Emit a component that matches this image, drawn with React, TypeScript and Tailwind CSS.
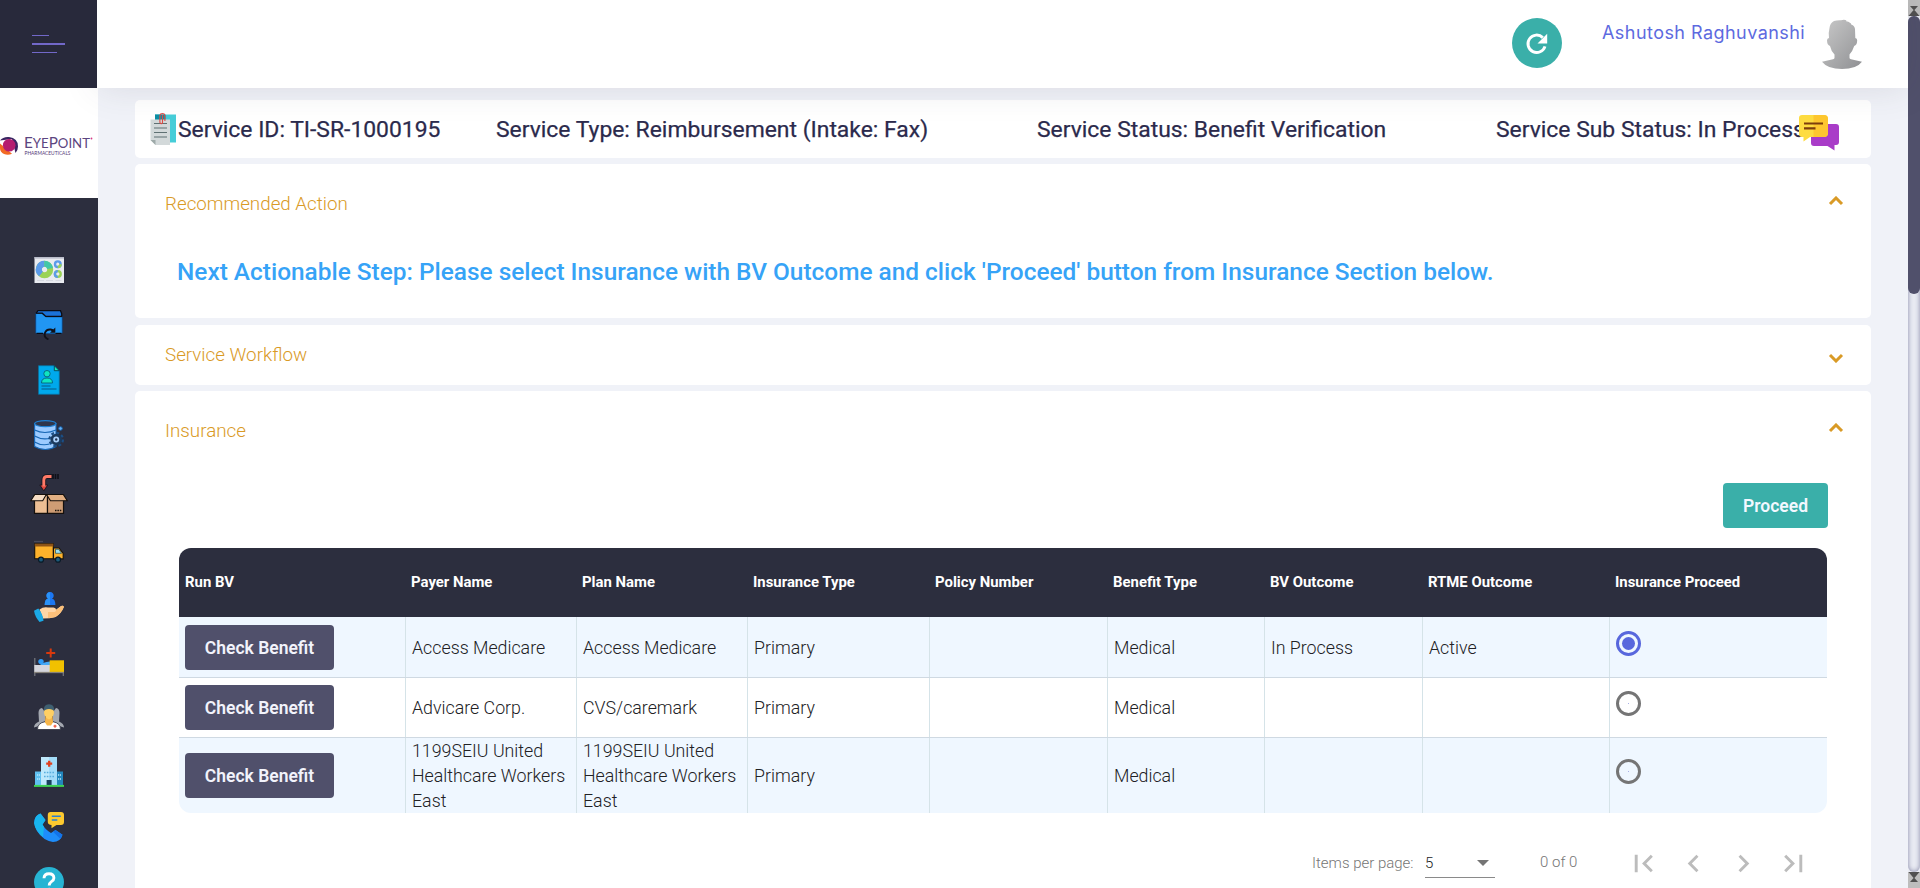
import React from "react";

/* ---------- sidebar icons ---------- */

const Dashboard = () => (
  <svg className="h-[30px] w-[30px] shrink-0" viewBox="0 0 30 30">
    <rect x="0.5" y="2" width="29.5" height="26" fill="#e9ebf0" />
    <rect x="0.5" y="2" width="29.5" height="1.6" fill="#b9bcc9" />
    <circle cx="10.5" cy="14.5" r="5.700" fill="none" stroke="#9ad356" strokeWidth="6" />
    <path d="M7 19a5.700 5.700 0 0 1 3.500-10.200" fill="none" stroke="#5b9bea" strokeWidth="6" />
    <path d="M10.500 8.800a5.700 5.700 0 0 1 5.600 4.700" fill="none" stroke="#42c7a8" strokeWidth="6" />
    <circle cx="23.8" cy="9.200" r="2.800" fill="none" stroke="#5b9bea" strokeWidth="2.400" />
    <path d="M26.600 9.200a2.800 2.800 0 0 1-2.800 2.800" fill="none" stroke="#9ad356" strokeWidth="2.400" />
    <circle cx="23.8" cy="19" r="2.900" fill="none" stroke="#9ad356" strokeWidth="2.400" />
    <path d="M23.800 21.900a2.900 2.900 0 0 1 0-5.800" fill="none" stroke="#5b9bea" strokeWidth="2.400" />
    <path d="M3 25.500h7M12 25.500h7M21.500 25.500h6" stroke="#d4d7de" strokeWidth="0.9" />
  </svg>
);

const FolderSync = () => (
  <svg className="h-[30px] w-[30px] shrink-0" viewBox="0 0 30 30">
    <path d="M4 0.700h22.500l1.200 3V9H2V3.500z" fill="#1b72d8" stroke="#0b0c14" strokeWidth="1.200" />
    <path d="M1.700 3.500h6.500l3.600 3.300h16.500v15.700q0 1.200-1.200 1.200H3q-1.300 0-1.300-1.200z" fill="#2196f3" stroke="#0f3f77" strokeWidth="0.800" />
    <path d="M2 3.200h6.300l3.500 3.200h16.300M2.500 23.300h6.500M21.500 23.300h6" fill="none" stroke="#0b0c14" strokeWidth="1.300" />
    <path d="M14.500 29.300q-4.700-1.500-3.700-6 1.500-4.300 6-3.800 2 .4 3.400 2.200" fill="none" stroke="#101018" strokeWidth="1.900" />
    <path d="M21.300 17.500v5.300h-5.300z" fill="#101018" />
  </svg>
);

const Profile = () => (
  <svg className="h-[30px] w-[30px] shrink-0" viewBox="0 0 30 30">
    <path d="M4.500 0.700h15.800l5 5v23.600H4.500z" fill="#00a9ec" stroke="#0a6e9c" strokeWidth="0.800" />
    <path d="M20.300 0.700v5h5z" fill="#1ee8b6" stroke="#083d55" strokeWidth="0.900" />
    <circle cx="13" cy="8.700" r="3.200" fill="#10e5c0" stroke="#07607c" strokeWidth="0.900" />
    <path d="M7.500 18q0-5 5.500-5t5.500 5z" fill="#10e5c0" stroke="#07607c" strokeWidth="0.900" />
    <path d="M7.500 21h9M7.500 24h15" stroke="#075a85" strokeWidth="1" />
  </svg>
);

const DatabaseGear = () => (
  <svg className="h-[30px] w-[30px] shrink-0" viewBox="0 0 30 30">
    <path d="M0.600 3.500v23q5 3 10.700 3t10.700-3v-23z" fill="#9ccbff" stroke="#1767b5" strokeWidth="1.100" />
    <ellipse cx="11.300" cy="3.600" rx="10.700" ry="3" fill="#30364a" stroke="#1f7fd0" strokeWidth="1.200" />
    <path d="M0.600 10q10 5 21.400 0M0.600 16q8 4.500 16 2M0.600 22q7 4.200 15 2" fill="none" stroke="#1767b5" strokeWidth="1.200" />
    <circle cx="22.200" cy="19.500" r="6.700" fill="none" stroke="#1b4f86" strokeWidth="2.200" strokeDasharray="2.900 2.360" />
    <circle cx="22.200" cy="19.500" r="4.400" fill="#a9d0fb" stroke="#1b3a5e" strokeWidth="2.800" />
    <circle cx="22.200" cy="19.500" r="1.200" fill="#24334e" />
    <circle cx="26.500" cy="8.500" r="1.800" fill="#67b1f3" stroke="#1767b5" strokeWidth="1" />
  </svg>
);

const BoxIn = () => (
  <svg className="-mt-px -mb-0.5 h-[40px] w-[38px] shrink-0" viewBox="0 0 38 40">
    <path d="M22 2.500h-4.800q-3.400 0-3.400 3.500v6" fill="none" stroke="#15151d" strokeWidth="4.600" />
    <path d="M9.800 11h8l-4 5.800z" fill="#d9453d" stroke="#15151d" strokeWidth="0.900" />
    <path d="M21.500 2.500h-4.300q-3.400 0-3.400 3.500v6.500" fill="none" stroke="#ff7a67" strokeWidth="2.900" />
    <path d="M23 0v5M25.500 0v5M28 0v5" stroke="#101018" strokeWidth="1.600" />
    <path d="M4.500 21h13v18.300h-13z" fill="#edbf94" stroke="#15100c" strokeWidth="1.200" />
    <path d="M17.500 21h16v18.300h-16z" fill="#cf9d74" stroke="#15100c" strokeWidth="1.200" />
    <path d="M4.800 20.500h11.500l-3.600 6.200H0.800z" fill="#f6ddc4" stroke="#15100c" strokeWidth="1.100" />
    <path d="M16.500 20.500h16.800l4 6.200H20.500z" fill="#e2af82" stroke="#15100c" strokeWidth="1.100" />
    <path d="M25 36.500h7" stroke="#15100c" strokeWidth="1.300" strokeDasharray="1.500 0.900" />
  </svg>
);

const Truck = () => (
  <svg className="h-[30px] w-[30px] shrink-0" viewBox="0 0 30 30">
    <path d="M0 4.500h9" stroke="#494b5b" strokeWidth="1.300" />
    <path d="M0.700 6.700h18.600v15H0.700z" fill="#fdb22b" stroke="#15120c" strokeWidth="1.100" />
    <path d="M0.700 6.700h18.600v2.800H0.700z" fill="#8c5317" />
    <path d="M19.500 11h5.500l4.200 5.500v5.400h-9.700z" fill="#fdb22b" stroke="#15120c" strokeWidth="1.100" />
    <path d="M21.500 12.300h3.200l2.900 4h-6.100z" fill="#9ee0ee" stroke="#1e4b59" strokeWidth="0.700" />
    <circle cx="7" cy="22.700" r="2.500" fill="#1c5b7c" stroke="#0a1a26" strokeWidth="1.200" />
    <circle cx="24" cy="22.700" r="2.500" fill="#1c5b7c" stroke="#0a1a26" strokeWidth="1.200" />
  </svg>
);

const HandPerson = () => (
  <svg className="h-[30px] w-[30px] shrink-0" viewBox="0 0 30 30">
    <path d="M10.700 13q0-5.800 3.300-6.200a3.700 3.700 0 1 1 4 0q3.400.4 3.400 6.200z" fill="#1c77f2" />
    <path d="M12.600 3.700a3.400 3.400 0 0 1 3.400-3.400V13h-5.300q0-5.800 3.300-6.200-1.400-1.200-1.400-3.100z" fill="#2a92f8" />
    <path d="M5.500 17.500q4-3 8.500-2h5.500q2.600.2 2.600 2.200l5-3.800q2.400-.8 2.700 1.200-2.500 6.500-8.300 9.900-5.500 1.500-12.500 1.500z" fill="#ffd6a6" />
    <path d="M14 20h6.500q1.600-.6 1.700-2.300l5-3.800q2.400-.8 2.700 1.200-2.500 6.500-8.300 9.900-4 1-7.600 1z" fill="#fcc07a" />
    <path d="M0 18.800l4.300-2.300q4.500 5 5.200 12.300l-4 1.200Q1 25 0 18.800z" fill="#1ba9e6" />
  </svg>
);

const Bed = () => (
  <svg className="h-[30px] w-[30px] shrink-0" viewBox="0 0 30 30">
    <path d="M16.700 1.500v9M12.200 6h9" stroke="#d8390d" strokeWidth="2" />
    <path d="M0.800 11v18M29.300 26v3" stroke="#77797f" strokeWidth="1.200" />
    <circle cx="7" cy="14.600" r="2.700" fill="#2f9cf6" />
    <path d="M6 18q2.500-3 10-3.500v5H6z" fill="#46a9f7" />
    <path d="M0.300 18H16v7.500H0.300z" fill="#d5d6dd" />
    <path d="M15.700 13.300H30v12.200H15.700z" fill="#f1c100" />
    <path d="M0 25.500h30" stroke="#85817a" strokeWidth="1.300" />
  </svg>
);

const People = () => (
  <svg className="h-[30px] w-[30px] shrink-0" viewBox="0 0 30 30">
    <path d="M4.500 11q0-4.500 3.500-5l3 4v9l-3 4-8 2.500q0-4 5-6z" fill="#a4a8b0" />
    <path d="M25.500 11q0-4.500-3.500-5l-3 4v9l3 4 8 2.500q0-4-5-6z" fill="#a4a8b0" />
    <path d="M3.500 27.500q0-6.500 7.500-7.800h8q7.500 1.300 7.500 7.800z" fill="#fff" stroke="#2c2e3e" strokeWidth="0.800" />
    <path d="M11.300 15h7.400l.3 5.300-2 3.300h-4l-2-3.300z" fill="#f7b64a" />
    <path d="M10 8q0-2 5-2t5 2q.3 8-5 9.500Q9.700 16 10 8z" fill="#ffcf63" />
    <path d="M9.800 9.500Q9.300 2.300 15 2.300t5.200 7.200q-1-2.500-5.200-2.500T9.800 9.500z" fill="#3f5f70" />
    <path d="M21 22.700v3M19.500 24.200h3" stroke="#f0553c" strokeWidth="1.300" />
  </svg>
);

const Hospital = () => (
  <svg className="h-[30px] w-[30px] shrink-0" viewBox="0 0 30 30">
    <path d="M1 14.500h7V29H1z" fill="#5fc0f0" />
    <path d="M22 14.500h7V29h-7z" fill="#2387bd" />
    <path d="M7 0h16v29H7z" fill="#a3dcf9" />
    <path d="M7 0h8v29H7z" fill="#bfe9fc" />
    <path d="M15.200 3.700v6M12.200 6.700h6" stroke="#e0401e" strokeWidth="2.300" />
    <path d="M10 15.500h10M10 19.500h10" stroke="#59aede" strokeWidth="1.500" strokeDasharray="1.600 1.200" />
    <path d="M3 18h3M3 22h3M24 18h3M24 22h3" stroke="#b8e6fb" strokeWidth="1.500" strokeDasharray="1.200 0.700" />
    <path d="M12.600 23h5v5.500h-5z" fill="#19415d" />
    <path d="M0 28.900h30" stroke="#3ed454" strokeWidth="2" />
  </svg>
);

const Phone = () => (
  <svg className="h-[30px] w-[30px] shrink-0" viewBox="0 0 30 30">
    <path d="M1 6.500Q3 2.500 6.500 1.600l5 6.400-3 4.500q3 5.500 8.500 8.500l4.500-3 7 4.700Q26.500 30 19 30 9 28.500 3 19q-4-7-2-12.500z" fill="#1e8dfb" />
    <path d="M1 6.500Q3 2.500 6.500 1.600l5 6.400-3 4.500 1.500 2.500-1 10Q1 18.500 0 11z" fill="#18b5ee" />
    <path d="M21.500 18l7 4.700-2 4.300-7.500-7.300z" fill="#1273ea" />
    <path d="M16.500 0H27q3 0 3 3v7q0 3-3 3h-4.500l-5 3.200V13q-3.700-.3-3.700-3V3q0-3 2.700-3z" fill="#fcc92f" />
    <path d="M17.800 4.300h9M17.800 8h5.500" stroke="#2a7fd0" strokeWidth="1.500" />
  </svg>
);

const Help = () => (
  <svg className="h-[30px] w-[30px] shrink-0" viewBox="0 0 30 30">
    <circle cx="15" cy="15" r="15" fill="#27b4d3" />
    <path d="M10 11.300Q10.200 6.800 15 6.800t4.900 4.200q0 2-2.500 3.600-2.200 1.500-2.200 3.900" fill="none" stroke="#fff" strokeWidth="2.900" />
    <circle cx="15.200" cy="22.600" r="1.800" fill="#fff" />
  </svg>
);

function Sidebar() {
  return (
    <aside className="relative flex w-[98px] shrink-0 flex-col">
      <div className="relative z-20 flex h-[88px] w-[97px] shrink-0 flex-col bg-[#28293b] pt-[35px] pl-8">
        <span className="h-px w-[17px] bg-[#7268c9]" />
        <span className="mt-[7px] h-0.5 w-[33px] bg-[#7268c9]" />
        <span className="mt-[7px] h-px w-[25px] bg-[#7268c9]" />
      </div>
      <div className="flex h-[110px] shrink-0 items-start bg-white pt-[46px]">
        <svg className="h-[24px] w-[98px]" viewBox="0 0 98 24" fontFamily="Lato, sans-serif">
          <path d="M0 6.500Q3 2.500 9 3q9 1 9 9.500 0 4-2.500 6.500L12 5z" fill="#3c2562" />
          <path d="M0 9.500l12 10.300Q8 21.500 4 20 0 18 0 14z" fill="#f26a25" />
          <circle cx="9.200" cy="11.200" r="6.300" fill="#b51c6f" />
          <text x="24" y="14.200" fontSize="14.500" fill="#5c4580" textLength="66" lengthAdjust="spacingAndGlyphs">
            E<tspan fontSize="12.500">YE</tspan>P<tspan fontSize="12.500">OINT</tspan>
          </text>
          <text x="24.500" y="20.800" fontSize="5.300" fill="#553a79" textLength="46" lengthAdjust="spacingAndGlyphs">PHARMACEUTICALS</text>
          <circle cx="91.500" cy="4.500" r="0.900" fill="#d93a86" />
        </svg>
      </div>
      <nav className="flex min-h-0 flex-1 flex-col items-center gap-[25px] overflow-hidden bg-[#2c2e3e] pt-[57px]">
        <Dashboard />
        <FolderSync />
        <Profile />
        <DatabaseGear />
        <BoxIn />
        <Truck />
        <HandPerson />
        <Bed />
        <People />
        <Hospital />
        <Phone />
        <Help />
      </nav>
    </aside>
  );
}

/* ---------- header ---------- */

function Header() {
  return (
    <header className="relative z-10 -ml-px flex h-[88px] shrink-0 items-start justify-end bg-white pr-[46px] shadow-[0_0_36px_0_rgba(69,65,78,0.13)]">
      <button className="mt-[18px] flex h-[50px] w-[50px] items-center justify-center rounded-full bg-[#3aafa9]">
        <svg className="h-[50px] w-[50px]" viewBox="0 0 50 50">
          <path d="M30.800 19.600A8.700 8.700 0 1 0 33 28.300" fill="none" stroke="#fff" strokeWidth="2.900" />
          <path d="M35.200 15.800v9.700h-9.700z" fill="#fff" />
        </svg>
      </button>
      <span className="mt-[20px] ml-[40px] w-[202px] whitespace-nowrap font-[Inter,sans-serif] text-[18px] leading-[26px] font-normal tracking-[0.450px] text-[#5d6ae0]">
        Ashutosh Raghuvanshi
      </span>
      <svg className="mt-[19px] ml-[18px] h-[50px] w-[40px]" viewBox="0 0 40 50">
        <defs>
          <linearGradient id="avatar" x1="0" y1="0" x2="1" y2="1">
            <stop offset="0" stopColor="#c9c9c9" />
            <stop offset="1" stopColor="#8f9093" />
          </linearGradient>
        </defs>
        <path
          d="M7.500 9q.5-5 4.500-7 3-1 7-.8 3-1 4.500-.1 1 .4 1 1.400 1.500-.4 3 1 1.500.5 2 2.200 3 .8 3.500 4.300l.3 9q1.900 0 1.900 2.500-.2 4.500-3 5.500-1.500 5-4.700 8.500v3.200q0 1.300 1.500 1.500l11 2.500Q34.500 50 20 50T0 42.700l11-2.500q1.500-.3 1.500-1.500v-3.200Q9 32 8 27q-2.800-1-3-5.500 0-2.500 2-2.500-.8-5 .5-10z"
          fill="url(#avatar)"
        />
      </svg>
    </header>
  );
}

/* ---------- cards ---------- */

const Chevron = ({ down = false }: { down?: boolean }) => (
  <svg className={down ? "h-[10px] w-[16px] rotate-180" : "h-[10px] w-[16px]"} viewBox="0 0 16 10">
    <path d="M2 8l6-6 6 6" fill="none" stroke="#d99a26" strokeWidth="3" />
  </svg>
);

function CardTitle({ title, down }: { title: string; down?: boolean }) {
  return (
    <div className="flex h-[30px] items-center justify-between pr-[27px] pl-[30px]">
      <h2 className="pt-[2px] text-[18.800px] font-light text-[#d99a26]">{title}</h2>
      <div className={down ? "pt-[8px]" : "pb-[4px]"}>
        <Chevron down={down} />
      </div>
    </div>
  );
}

function Summary() {
  return (
    <section className="relative flex h-[58px] shrink-0 items-center rounded-[5px] bg-white pl-[15px] text-[22.900px] whitespace-nowrap text-[#2b2a4c] [-webkit-text-stroke:0.250px_#2b2a4c]">
      <svg className="h-[34px] w-[28px] shrink-0" viewBox="0 0 28 34">
        <path d="M5 2.500h21v28H5z" fill="#46cdd8" />
        <path d="M5 2.500h10.500v6H5z" fill="#0d8ea4" />
        <path d="M0.500 7.500H20V33H5.500l-5-5z" fill="#d3d9da" />
        <path d="M0.500 28l5 5v-5z" fill="#9eaaa9" />
        <path d="M4 11.500h13M4 16h13M4 20.500h13M4 25h13" stroke="#5f7173" strokeWidth="1.200" />
        <path d="M12.500 3v7.500q-1 2.500-2.600 0V3.500q.3-2 2.500-2t2.500 2V9" fill="none" stroke="#e04a43" strokeWidth="1.100" />
      </svg>
      <span className="w-[318px] pt-[2px]">Service ID: TI-SR-1000195</span>
      <span className="w-[541px] pt-[2px]">Service Type: Reimbursement (Intake: Fax)</span>
      <span className="w-[459px] pt-[2px]">Service Status: Benefit Verification</span>
      <span className="pt-[2px]">Service Sub Status: In Process</span>
      <svg className="absolute top-[15px] left-[1664px] h-[36px] w-[40px]" viewBox="0 0 40 36">
        <path d="M15 9h22q3 0 3 3v15q0 3-3 3h-1.500v5.500L28.500 31H15q-3 0-3-3V12q0-3 3-3z" fill="#a93cc8" />
        <path d="M3 0h22q4 0 4 4v14q0 4-4 4H11l-6.500 4.500V22H3q-3 0-3-3.500V3q0-3 3-3z" fill="#fedc41" />
        <path d="M14.500 0H25q4 0 4 4v14q0 4-4 4H14.500z" fill="#fec72f" />
        <path d="M5 8.500h19M5 13.300h11.500" stroke="#7d3e0d" strokeWidth="2.200" />
      </svg>
    </section>
  );
}

/* ---------- insurance table ---------- */

const columns = [
  "Run BV",
  "Payer Name",
  "Plan Name",
  "Insurance Type",
  "Policy Number",
  "Benefit Type",
  "BV Outcome",
  "RTME Outcome",
  "Insurance Proceed",
];

const grid = "grid grid-cols-[226px_171px_171px_182px_178px_157px_158px_187px_218px]";

type Row = { cells: string[]; selected?: boolean; className: string };

const rows: Row[] = [
  {
    cells: ["Access Medicare", "Access Medicare", "Primary", "", "Medical", "In Process", "Active"],
    selected: true,
    className: "h-[61px] border-b bg-[#eff7ff]",
  },
  {
    cells: ["Advicare Corp.", "CVS/caremark", "Primary", "", "Medical", "", ""],
    className: "h-[60px] border-b bg-white",
  },
  {
    cells: ["1199SEIU United Healthcare Workers East", "1199SEIU United Healthcare Workers East", "Primary", "", "Medical", "", ""],
    className: "h-[75px] bg-[#eff7ff]",
  },
];

function Radio({ selected }: { selected?: boolean }) {
  return selected ? (
    <span className="flex h-[25px] w-[25px] items-center justify-center rounded-full border-3 border-[#5867dd]">
      <span className="h-[13px] w-[13px] rounded-full bg-[#5867dd]" />
    </span>
  ) : (
    <span className="flex h-[25px] w-[25px] items-center justify-center rounded-full border-3 border-[#757575]">
      <span className="h-px w-px bg-[#a9b0e6]" />
    </span>
  );
}

function InsuranceTable() {
  return (
    <div className="mr-[44px] ml-[44px] overflow-hidden rounded-[12px]">
      <div className={`${grid} h-[69px] items-center bg-[#2c2e3e] text-[14.900px] font-bold text-white`}>
        {columns.map((c) => (
          <span key={c} className="pl-[6px]">{c}</span>
        ))}
      </div>
      {rows.map((row, i) => (
        <div key={i} className={`${grid} border-[#cfd9e2] ${row.className}`}>
          <div className="flex items-center pl-[6px]">
            <button className="h-[45px] w-[149px] rounded-[4px] bg-[#50506b] pt-[2px] text-[17.500px] font-semibold text-[#f2f3fb]">
              Check Benefit
            </button>
          </div>
          {row.cells.map((cell, j) => (
            <div key={j} className="flex items-center border-l border-[#d5e3e8] pl-[6px] text-[17.800px] leading-[25px] font-[350] text-[#212124]">
              {cell}
            </div>
          ))}
          <div className="flex items-center border-l border-[#d5e3e8] pb-[8px] pl-[6px]">
            <Radio selected={row.selected} />
          </div>
        </div>
      ))}
    </div>
  );
}

const PagerIcon = ({ d }: { d: string }) => (
  <svg className="h-[35px] w-[35px]" viewBox="0 0 24 24" fill="#bcbcbc">
    <path d={d} />
  </svg>
);

function Paginator() {
  return (
    <div className="mt-[33px] flex h-[35px] items-center justify-end pr-[60px] text-[15px] font-[350] text-[#757575]">
      <span className="w-[113px]">Items per page:</span>
      <span className="flex h-[29px] w-[70px] items-center justify-between border-b border-[#8a8a8a] pr-[6px] text-[15px] text-[#222]">
        5
        <svg className="h-[6px] w-[12px]" viewBox="0 0 12 6"><path d="M0 0h12L6 6z" fill="#757575" /></svg>
      </span>
      <span className="ml-[45px] w-[86px] pb-[2px]">0 of 0</span>
      <div className="flex gap-[15px]">
        <PagerIcon d="M18.410 16.590L13.820 12l4.590-4.590L17 6l-6 6 6 6zM6 6h2v12H6z" />
        <PagerIcon d="M15.410 7.410L14 6l-6 6 6 6 1.410-1.410L10.830 12z" />
        <PagerIcon d="M10 6L8.590 7.410 13.170 12l-4.580 4.590L10 18l6-6z" />
        <PagerIcon d="M5.590 7.410L10.180 12l-4.590 4.590L7 18l6-6-6-6zM16 6h2v12h-2z" />
      </div>
    </div>
  );
}

function Scrollbar() {
  return (
    <div className="flex w-[12px] shrink-0 flex-col bg-[#e9ebf3]">
      <div className="h-[16px] bg-[#bdbdbd]">
        <svg className="block h-[16px] w-[12px]" viewBox="0 0 12 16"><path d="M2 6h8L6 10.500zM0.500 16L6 9.500l5.500 6.500z" fill="#505050" /></svg>
      </div>
      <div className="flex-1 rounded-[6px] shadow-[inset_0_0_5px_#8587a6]">
        <div className="h-[278px] rounded-[6px] bg-[#50506b]" />
      </div>
      <div className="h-[16px] bg-[#bdbdbd]">
        <svg className="block h-[16px] w-[12px]" viewBox="0 0 12 16"><path d="M0.500 0L6 6.500 11.500 0zM2 10h8L6 5.500z" fill="#505050" /></svg>
      </div>
    </div>
  );
}

export default function App() {
  return (
    <div className="flex h-[888px] w-[1920px] overflow-hidden bg-[#f0f2f8] font-[Roboto,sans-serif]">
      <Sidebar />
      <div className="flex min-w-0 flex-1 flex-col">
        <Header />
        <main className="flex min-h-0 flex-1 flex-col overflow-hidden pt-[12px] pr-[37px] pl-[37px]">
          <Summary />
          <section className="mt-[6px] h-[154px] shrink-0 rounded-[5px] bg-white pt-[24px]">
            <CardTitle title="Recommended Action" />
            <p className="mt-[39px] pl-[42px] text-[24.420px] leading-[30px] font-medium whitespace-nowrap text-[#36a3f7]">
              Next Actionable Step: Please select Insurance with BV Outcome and click 'Proceed' button from Insurance Section below.
            </p>
          </section>
          <section className="mt-[7px] h-[60px] shrink-0 rounded-[5px] bg-white pt-[14px]">
            <CardTitle title="Service Workflow" down />
          </section>
          <section className="mt-[6px] h-[560px] shrink-0 rounded-[5px] bg-white pt-[24px]">
            <CardTitle title="Insurance" />
            <div className="mt-[38px] mb-[20px] flex justify-end pr-[43px]">
              <button className="h-[45px] w-[105px] rounded-[4px] bg-[#3aafa9] pt-[2px] text-[17.500px] font-semibold text-[#f2f8ff]">Proceed</button>
            </div>
            <InsuranceTable />
            <Paginator />
          </section>
        </main>
      </div>
      <Scrollbar />
    </div>
  );
}
